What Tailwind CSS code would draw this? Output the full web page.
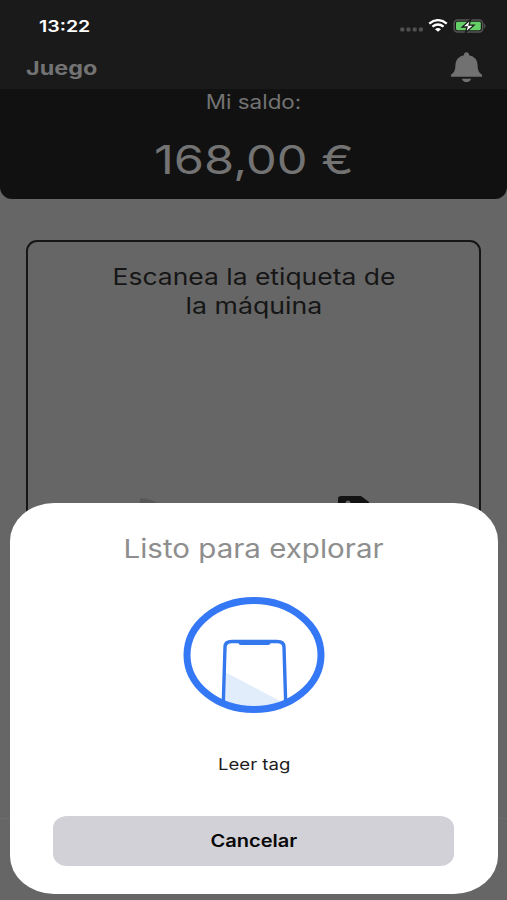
<!DOCTYPE html>
<html lang="es">
<head>
<meta charset="utf-8">
<title>Juego</title>
<script src="https://cdn.jsdelivr.net/npm/@tailwindcss/browser@4"></script>
</head>
<body class="bg-[#666666] font-['Inter','Liberation_Sans',sans-serif]">
<div class="relative h-[900px] w-[507px] overflow-hidden bg-[#666666]">
  <header class="h-[89px] bg-[#1a1a1a]">
    <div class="flex h-[50px] items-center justify-between pl-[39px] pr-[20px] pt-px">
      <span class="inline-block origin-left scale-x-[1.22] text-[16px] font-semibold leading-5 text-white">13:22</span>
      <div class="flex items-center">
        <svg class="mt-[8px] h-[5px] w-[24px]" viewBox="0 0 24 5" fill="#505050"><rect x="0.3" y="0.5" width="4" height="4" rx="1.2"/><rect x="6.5" y="0.5" width="4" height="4" rx="1.2"/><rect x="12.7" y="0.5" width="4" height="4" rx="1.2"/><rect x="18.9" y="0.5" width="4" height="4" rx="1.2"/></svg>
        <svg class="ml-[4px] h-[14px] w-[20px]" viewBox="0 0 20 14" fill="none" stroke="#fff" stroke-width="2.3"><path d="M1.2 4.6Q10-2.3 18.8 4.6M4.4 7.7Q10 3.3 15.6 7.7"/><path d="M7 10.2Q10 8 13 10.2L10 12.7Z" fill="#fff" stroke="none"/></svg>
        <svg class="ml-[5px] h-[16px] w-[34px]" viewBox="0 0 34 16"><rect x="1.1" y="2" width="28.6" height="12" rx="3.5" fill="none" stroke="#555" stroke-width="1.5"/><path d="M31.2 5.5Q34 8 31.2 10.5Z" fill="#555"/><rect x="3" y="3.8" width="24.8" height="8.4" rx="1.4" fill="#65cf68"/><path d="M17.7 1.6L9.2 9h4.9L12.400 14.7 21 7.200H16Z" fill="#fff" stroke="#1a1a1a" stroke-width="1.3"/></svg>
      </div>
    </div>
    <div class="flex h-[39px] items-start justify-between pl-[25.5px] pr-[24px]">
      <h1 class="mt-[6.500px] inline-block origin-left scale-x-[1.23] text-[19px] font-bold leading-6 text-[#737373]">Juego</h1>
      <svg class="mt-[2px] h-[31px] w-[33px]" viewBox="0 0 33 31" fill="#717171"><path d="M13.8 3.2Q14.2.3 16.5.3T19.2 3.2Q27.2 5 27.6 13.2C27.8 18.5 28.6 20 31.5 22.2Q33.2 24.8 30.8 24.8H2.2Q-.2 24.8 1.5 22.2C4.4 20 5.2 18.5 5.4 13.2Q5.8 5 13.8 3.2Z"/><path d="M11.8 26.7H21.2Q19.9 30.1 16.5 30.1T11.8 26.7Z"/></svg>
    </div>
  </header>
  <section class="flex h-[110px] flex-col items-center rounded-b-[12px] bg-[#111111] text-[#737373]">
    <p class="mt-px inline-block scale-x-[1.15] text-[19.5px] leading-6">Mi saldo:</p>
    <p class="mt-[22px] inline-block scale-x-[1.22] text-[40px] leading-[48px]">168,00 €</p>
  </section>
  <main class="mx-[26px] mt-[41px] h-[600px] rounded-[11px] border-2 border-[#161616] pt-[21px] text-center">
    <h2 class="text-[23px] leading-[29px] text-[#161616]"><span class="inline-block scale-x-[1.15]">Escanea la etiqueta de</span><br><span class="inline-block scale-x-[1.16]">la máquina</span></h2>
  </main>
  <svg class="absolute left-[139px] top-[495px] h-[12px] w-[234px]" viewBox="0 0 234 12"><path d="M1 3.5Q12 3 19 9H1Z" fill="#575757"/><path d="M199 10V4Q199 1 202 1H222L230 7V10Z" fill="#131313"/><circle cx="209" cy="8" r="2.5" fill="#666"/></svg>
  <div class="absolute left-0 top-[818px] h-px w-full bg-[#6d6d6d]"></div>
  <div role="dialog" class="absolute left-[9.5px] top-[503px] flex h-[390.5px] w-[488.5px] flex-col items-center rounded-[44px/38px] bg-white">
    <h2 class="mt-[30px] inline-block scale-x-[1.135] text-[26px] leading-8 text-[#8e8e8e]">Listo para explorar</h2>
    <svg class="mt-[30px] h-[120px] w-[144px]" viewBox="0 0 144 120" fill="none">
      <defs><clipPath id="ring"><ellipse cx="72" cy="60" rx="68" ry="55"/></clipPath></defs>
      <g clip-path="url(#ring)"><path d="M43 77L98 106V120H40Z" fill="#e2edfc"/><path d="M41 118L43 52Q43 46.500 50 46.500H95Q102 46.500 102 52L104 118" stroke="#3478ed" stroke-width="3.400"/><path d="M56 45H89V46.500Q88.500 50 86 50H59Q56.500 50 56 46.500Z" fill="#3478ed"/></g>
      <ellipse cx="72" cy="60" rx="67" ry="54.500" stroke="#3478f6" stroke-width="7"/>
    </svg>
    <p class="mt-[37px] inline-block scale-x-[1.16] text-[16px] leading-6 text-[#1c1c1c]">Leer tag</p>
    <button class="mt-[40px] h-[50px] w-[401px] rounded-[14px/12px] bg-[#d2d1d7] pt-[2px] text-[17px] font-semibold text-[#080808]"><span class="inline-block scale-x-[1.18]">Cancelar</span></button>
  </div>
</div>
</body>
</html>
